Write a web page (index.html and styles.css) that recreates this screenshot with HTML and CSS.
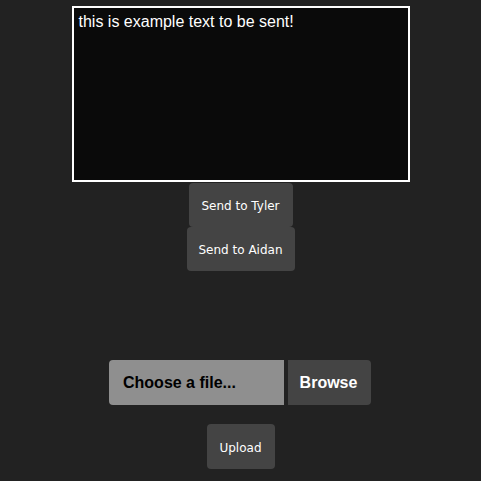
FILE: index.html
```html
<!DOCTYPE html>
<html>
<head>
<meta charset="utf-8">
<link rel="stylesheet" href="styles.css">
</head>
<body>
<main class="page">
  <section class="send">
    <textarea class="message">this is example text to be sent!</textarea>
    <button class="btn btn-send tyler">Send to Tyler</button>
    <button class="btn btn-send aidan">Send to Aidan</button>
  </section>
  <section class="upload">
    <div class="file">
      <span class="file-name">Choose a file...</span>
      <span class="file-browse">Browse</span>
    </div>
    <button class="btn btn-upload">Upload</button>
  </section>
</main>
</body>
</html>
```
FILE: styles.css
```css
html, body {
  margin: 0;
  padding: 0;
  background: #222222;
  width: 481px;
  height: 481px;
  overflow: hidden;
}
.page {
  display: flex;
  flex-direction: column;
  align-items: center;
  padding-top: 6px;
}
.send {
  display: flex;
  flex-direction: column;
  align-items: center;
}
.message {
  box-sizing: border-box;
  width: 338px;
  height: 176px;
  margin: 0 0 1px 0;
  padding: 5px 5px;
  border: 2px solid #ffffff;
  background: #0a0a0a;
  color: #ffffff;
  font-family: "Liberation Sans", Arial, sans-serif;
  font-size: 16px;
  line-height: 18px;
  resize: none;
  outline: none;
  display: block;
}
.btn {
  box-sizing: border-box;
  border: none;
  border-radius: 4px;
  background: #444444;
  color: #ffffff;
  font-family: "DejaVu Sans", "Open Sans", sans-serif;
  font-size: 12px;
  height: 44px;
  padding: 2px 0 0 0;
  margin: 0;
  display: flex;
  align-items: center;
  justify-content: center;
}
.tyler { width: 104px; }
.aidan { width: 108px; }
.upload {
  display: flex;
  flex-direction: column;
  align-items: center;
  margin-top: 89px;
  gap: 19px;
}
.file {
  display: flex;
  gap: 4px;
  height: 45px;
  margin-right: 1px;
  font-family: "Liberation Sans", Arial, sans-serif;
  font-weight: bold;
  font-size: 16px;
}
.file-name {
  box-sizing: border-box;
  width: 175px;
  background: #8f8f8f;
  color: #000000;
  border-radius: 4px 0 0 4px;
  display: flex;
  align-items: center;
  padding-left: 14px;
  padding-top: 1px;
}
.file-browse {
  box-sizing: border-box;
  width: 83px;
  background: #444444;
  color: #ffffff;
  border-radius: 0 4px 4px 0;
  display: flex;
  align-items: center;
  justify-content: center;
  padding-top: 1px;
  padding-right: 2px;
}
.btn-upload {
  width: 68px;
  height: 45px;
}
```
